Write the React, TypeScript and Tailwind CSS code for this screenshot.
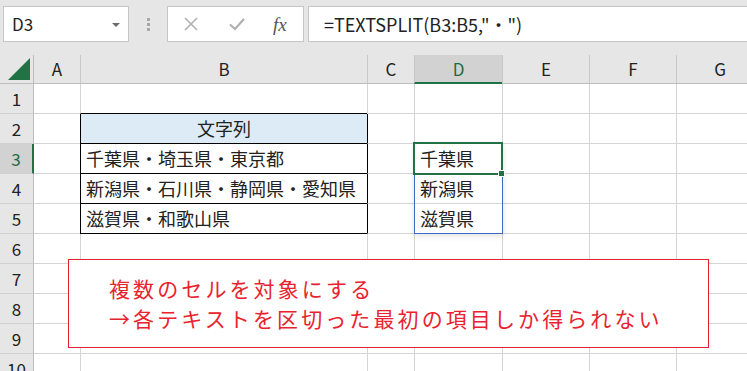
import * as React from "react";

const COLS = ["A", "B", "C", "D", "E", "F", "G"]
const WIDTHS = ["w-[46px]", "w-[287px]", "w-[47px]", "w-[88px]", "w-[87px]", "w-[87px]", "w-[87px]"]

const DATA: Record<string, string> = {
  B2: "文字列",
  B3: "千葉県・埼玉県・東京都",
  B4: "新潟県・石川県・静岡県・愛知県",
  B5: "滋賀県・和歌山県",
  D3: "千葉県",
  D4: "新潟県",
  D5: "滋賀県",
}

function cellClass(col: string, row: number) {
  const inTable = row >= 2 && row <= 5
  // left border
  let left = "border-l border-l-[#d4d4d4]"
  if (col === "A") left = ""
  if ((col === "B" || col === "C") && inTable) left = "border-l border-l-black"
  // bottom border
  let bottom = "border-b border-b-[#d4d4d4]"
  if (col === "B" && row >= 1 && row <= 5) bottom = "border-b border-b-black"
  const bg = col === "B" && row === 2 ? "bg-[#ddebf7] justify-center" : "bg-white"
  return `${left} ${bottom} ${bg}`
}

function TopBar() {
  return (
    <div className="h-[55px] bg-[#e6e6e6] flex items-start pt-[6px] pl-[3px]">
      {/* name box */}
      <div className="w-[126px] h-[36px] bg-white border border-[#c6c6c6] flex items-center justify-between pl-[8px] pr-[8px]">
        <span className="text-[17px] text-[#222]">D3</span>
        <span className="w-0 h-0 border-l-[4px] border-r-[4px] border-t-[4px] border-l-transparent border-r-transparent border-t-[#6b6b6b] mt-[1px]" />
      </div>
      {/* splitter dots */}
      <div className="w-[38px] h-[36px] flex flex-col items-center justify-center gap-[2px]">
        <span className="w-[3px] h-[3px] bg-[#a8a8a8]" />
        <span className="w-[3px] h-[3px] bg-[#a8a8a8]" />
        <span className="w-[3px] h-[3px] bg-[#a8a8a8]" />
      </div>
      {/* buttons */}
      <div className="w-[137px] h-[36px] bg-white border border-[#c6c6c6] flex items-center">
        <svg width="16" height="16" viewBox="0 0 16 16" className="ml-[15px]">
          <path d="M2 2 L14 14 M14 2 L2 14" stroke="#b0b0b0" strokeWidth="1.6" fill="none" />
        </svg>
        <svg width="18" height="16" viewBox="0 0 18 16" className="ml-[29px]">
          <path d="M2 8.5 L7 13 L16 3" stroke="#b0b0b0" strokeWidth="2.2" fill="none" />
        </svg>
        <span className="ml-[27px] text-[19px] italic text-[#555] leading-none" style={{ fontFamily: '"Liberation Serif", serif' }}>
          fx
        </span>
      </div>
      {/* formula */}
      <div className="ml-[4px] flex-1 h-[36px] bg-white border border-[#c6c6c6] border-r-0 flex items-center pl-[15px]">
        <span className="text-[18px] text-[#222]">=TEXTSPLIT(B3:B5,"・")</span>
      </div>
    </div>
  )
}

function HeaderRow() {
  return (
    <div className="flex h-[29px] border-b border-b-[#bdbdbd] bg-[#e6e6e6]">
      <div className="w-[34px] shrink-0 border-r border-r-[#bdbdbd] relative">
        <svg width="34" height="28" className="absolute left-0 top-0">
          <polygon points="30,3 30,25 8,25" fill="#217346" />
        </svg>
      </div>
      {COLS.map((c, i) => (
        <div
          key={c}
          className={`${WIDTHS[i]} shrink-0 flex items-center justify-center text-[17px] ${i === 0 ? "" : "border-l border-l-[#c8c8c8]"} ${c === "D" ? "bg-[#d2d2d2] text-[#1e6b40] border-b-2 border-b-[#217346] -mb-px" : "text-[#222]"}`}
        >
          {c}
        </div>
      ))}
    </div>
  )
}

export default function App() {
  const rows = [1, 2, 3, 4, 5, 6, 7, 8, 9, 10]
  return (
    <div
      className="w-[747px] h-[371px] overflow-hidden bg-white"
      style={{ fontFamily: '"Noto Sans CJK JP", "Noto Sans", sans-serif' }}
    >
      <TopBar />
      <div className="relative">
        <HeaderRow />
        {rows.map(r => (
          <div key={r} className="flex h-[30px]">
            <div
              className={`w-[34px] shrink-0 flex items-center justify-center text-[17px] border-b border-b-[#d0d0d0] ${r === 3 ? "bg-[#d2d2d2] text-[#1e6b40] border-r-2 border-r-[#217346]" : "bg-[#e6e6e6] text-[#222] border-r border-r-[#bdbdbd]"}`}
            >
              {r}
            </div>
            {COLS.map((c, i) => (
              <div
                key={c}
                className={`${WIDTHS[i]} shrink-0 flex items-center px-[5px] text-[18px] text-[#222] whitespace-nowrap ${cellClass(c, r)}`}
              >
                {DATA[`${c}${r}`] ?? ""}
              </div>
            ))}
          </div>
        ))}

        {/* spill range D3:D5 */}
        <div className="absolute left-[414px] top-[88px] w-[89px] h-[91px] border border-[#3a6cc4] shadow-[0_2px_6px_rgba(0,0,0,0.12)]" />
        {/* active cell D3 */}
        <div className="absolute left-[413px] top-[87px] w-[90px] h-[33px] border-2 border-[#217346]" />
        <div className="absolute left-[498px] top-[115px] w-[7px] h-[7px] bg-[#217346] border border-white" />

        {/* callout */}
        <div className="absolute left-[68px] top-[204px] w-[641px] h-[89px] bg-white border border-[#e3202c] pl-[40px] pt-[13px] text-[21px] leading-[30px] text-[#e8232d] tracking-[3.1px]">
          <div>複数のセルを対象にする</div>
          <div>→各テキストを区切った最初の項目しか得られない</div>
        </div>
      </div>
    </div>
  )
}
